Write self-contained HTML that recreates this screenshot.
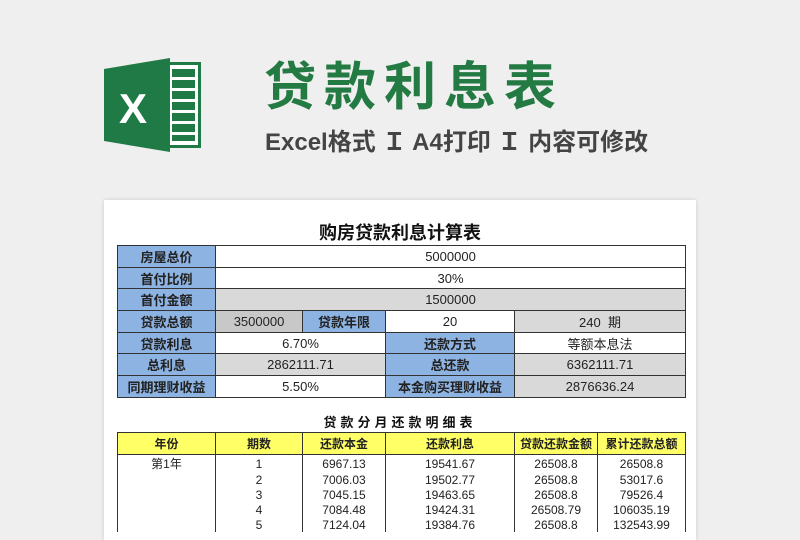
<!DOCTYPE html>
<html><head><meta charset="utf-8"><style>
body{margin:0;width:800px;height:526px;background:#efefef;overflow:hidden;font-family:"Liberation Sans","Noto Sans CJK SC",sans-serif;position:relative}
.h1{position:absolute;left:264px;top:57px;font-size:52px;font-weight:bold;color:#237a43;letter-spacing:8px;line-height:62px}
.h2{position:absolute;left:265px;top:128px;font-size:24px;font-weight:bold;color:#444;line-height:30px;letter-spacing:0px}
.paper{position:absolute;left:104px;top:200px;width:592px;height:340px;background:#fff;box-shadow:0 0 4px rgba(0,0,0,.15)}
table{border-collapse:collapse;position:absolute;table-layout:fixed}
td{text-align:center;padding:0;font-size:13px;color:#222;white-space:nowrap;overflow:hidden}
.t1 td{border:1px solid #333;height:20.7px}
.b{background:#8db3e2;font-weight:bold}
.g{background:#d9d9d9}
.gg{background:#c8c8c8}
.t2 td{height:15px;font-size:12px;border-left:1px solid #333;border-right:1px solid #333}
.t2 tr.hd td{height:21px;background:#ffff66;border:1px solid #333;font-weight:bold;font-size:12px}
.ti{position:absolute;font-weight:bold;color:#111}
</style></head><body>
<svg style="position:absolute;left:100px;top:55px" width="105" height="100" viewBox="0 0 105 100">
<rect x="60" y="7" width="41" height="86" fill="#1f7a45"/>
<rect x="63" y="10" width="35" height="80" fill="#fff"/>
<g fill="#1f7a45">
<rect x="72" y="14" width="23" height="8"/><rect x="72" y="25" width="23" height="8"/><rect x="72" y="36" width="23" height="8"/><rect x="72" y="47" width="23" height="8"/><rect x="72" y="58" width="23" height="8"/><rect x="72" y="69" width="23" height="8"/><rect x="72" y="80" width="23" height="6"/>
</g>
<polygon points="4,14 70,3 70,97 4,86" fill="#1f7a45"/>
<text x="19" y="68" font-family="Liberation Sans" font-weight="bold" font-size="42" fill="#fff">X</text>
</svg>
<div class="h1">贷款利息表</div>
<div class="h2">Excel格式 Ｉ A4打印 Ｉ 内容可修改</div>
<div class="paper"></div>
<div class="ti" style="left:0;width:800px;text-align:center;top:219px;font-size:18px">购房贷款利息计算表</div>
<table class="t1" style="left:117px;top:245px;width:568px">
<colgroup><col style="width:98px"><col style="width:87px"><col style="width:83px"><col style="width:129px"><col style="width:171px"></colgroup>
<tr><td class="b">房屋总价</td><td colspan="4">5000000</td></tr>
<tr><td class="b">首付比例</td><td colspan="4">30%</td></tr>
<tr><td class="b">首付金额</td><td colspan="4" class="g">1500000</td></tr>
<tr><td class="b">贷款总额</td><td class="gg">3500000</td><td class="b">贷款年限</td><td>20</td><td class="g">240 &nbsp;期</td></tr>
<tr><td class="b">贷款利息</td><td colspan="2">6.70%</td><td class="b">还款方式</td><td>等额本息法</td></tr>
<tr><td class="b">总利息</td><td colspan="2" class="g">2862111.71</td><td class="b">总还款</td><td class="g">6362111.71</td></tr>
<tr><td class="b">同期理财收益</td><td colspan="2">5.50%</td><td class="b">本金购买理财收益</td><td class="g">2876636.24</td></tr>
</table>
<div class="ti" style="left:0;width:800px;text-align:center;top:412px;font-size:13px;letter-spacing:4px">贷款分月还款明细表</div>
<table class="t2" style="left:117px;top:432px;width:568px">
<colgroup><col style="width:98px"><col style="width:87px"><col style="width:83px"><col style="width:129px"><col style="width:83px"><col style="width:88px"></colgroup>
<tr class="hd"><td>年份</td><td>期数</td><td>还款本金</td><td>还款利息</td><td>贷款还款金额</td><td>累计还款总额</td></tr>
<tr><td>第1年</td><td>1</td><td>6967.13</td><td>19541.67</td><td>26508.8</td><td>26508.8</td></tr>
<tr><td></td><td>2</td><td>7006.03</td><td>19502.77</td><td>26508.8</td><td>53017.6</td></tr>
<tr><td></td><td>3</td><td>7045.15</td><td>19463.65</td><td>26508.8</td><td>79526.4</td></tr>
<tr><td></td><td>4</td><td>7084.48</td><td>19424.31</td><td>26508.79</td><td>106035.19</td></tr>
<tr><td></td><td>5</td><td>7124.04</td><td>19384.76</td><td>26508.8</td><td>132543.99</td></tr>
</table>
</body></html>
